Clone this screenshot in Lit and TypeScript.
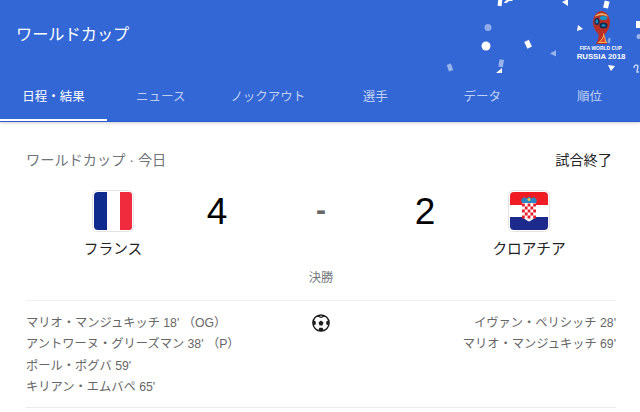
import { LitElement, html, css, svg } from "lit";
import { customElement } from "lit/decorators.js";

const confetti = svg`
  <g fill="#fff">
    <rect x="68" y="-2" width="4" height="8" transform="rotate(6 70 2)" />
    <path d="M74 3c1-2 3-4 5-3l4 0-1 1c-2 0-4 0-5 2z" />
    <path d="M132 2l6-3v7z" />
    <rect x="174" y="1" width="5" height="7" transform="rotate(14 176 4)" />
    <circle cx="56" cy="46" r="4.500" />
    <circle cx="58" cy="27.500" r="3.500" opacity=".45" />
    <rect x="95.500" y="40.500" width="5" height="7.500" transform="rotate(-25 98 44)" />
    <path d="M126 50v6.500l-6-3z" opacity=".5" />
    <rect x="69" y="59.500" width="4.500" height="7.500" transform="rotate(10 71 63)" opacity=".5" />
    <path d="M72 68v5h-6z" />
    <rect x="17.500" y="64" width="4.500" height="7" transform="rotate(-20 20 67)" opacity=".5" />
    <path d="M148 25l5 4l-6 2z" />
    <path d="M178 65l7 1l-4 5z" />
    <rect x="178" y="38" width="2.500" height="5" transform="rotate(10 179 40)" opacity=".4" />
    <rect x="206" y="21" width="4" height="7" />
    <circle cx="209" cy="36.500" r="2.500" opacity=".5" />
    <path d="M204 68c0-3 3-4 4-2l-1 6 2 0" fill="none" stroke="#fff" stroke-width="1.500" opacity=".7" />
  </g>`;

const logo = svg`
  <path d="M5.500 23C2 20 0 16 0 11.500 0 5 4 0 8.500 0S17 5 17 11.500c0 4.500-2 8.500-5 11.500-.5 3 .5 7 2.500 10H3c1.500-3 3-6 2.500-10z" fill="#b92f26" />
  <path d="M1.500 6C4 1 13 1 15.500 6 12 3.500 5 3.500 1.500 6z" fill="#e3b56a" />
  <ellipse cx="4" cy="10.500" rx="2.600" ry="3.600" fill="#0c3358" />
  <ellipse cx="3.800" cy="10.500" rx="1.300" ry="2" fill="#1b8fc2" />
  <ellipse cx="10.500" cy="7" rx="3.800" ry="2" fill="#1596c8" />
  <ellipse cx="10.500" cy="14.500" rx="4" ry="3" fill="#0b2c4e" />
  <ellipse cx="10.500" cy="14.500" rx="2" ry="1.300" fill="#1b8fc2" />
  <path d="M4.500 32c3.500-2.500 6-6 6-10.500l3.500 10.500z" fill="#efb758" />
  <path d="M7 31c2-2 3.500-4 4-6l1.500 6z" fill="#e5452f" />
`;

const soccer = svg`
  <circle cx="8" cy="8" r="7.200" fill="#fff" stroke="#1c1c1c" stroke-width="1.300" />
  <path d="M8 5.800l2.200 1.700-.9 2.700H6.700l-.9-2.700z" fill="#1c1c1c" />
  <path d="M5 1.200 8 2.400l3-1.200.6 1L8 3.600 4.400 2.200zM1 5.600l2.200.9.200 2.600-1.600.8L.8 8zM15 5.600l-2.200.9-.2 2.600 1.600.8L15.200 8zM5.600 14.600l1-2.300h2.800l1 2.300L8 15.300z" fill="#1c1c1c" />
`;

const checker = () => {
  const cells = [];
  for (let r = 0; r < 5; r++) {
    for (let c = 0; c < 5; c++) {
      if ((r + c) % 2 === 0) {
        cells.push(svg`<rect x=${14 + c * 2.8} y=${13.5 + r * 3} width="2.800" height="3" fill="#e8202a" />`);
      }
    }
  }
  return cells;
};

@customElement("app-root")
export class AppRoot extends LitElement {
  static styles = css`
    :host { display: block; width: 640px; height: 412px; overflow: hidden; background: #fff; font-family: "Liberation Sans", "Noto Sans CJK JP", sans-serif; }
    .header { position: relative; height: 122px; background: #3367d6; box-shadow: 0 1px 3px rgba(0,0,0,.2); display: flex; flex-direction: column; overflow: hidden; }
    .title { height: 81px; box-sizing: border-box; padding: 24px 16px 0; font-size: 16.200px; line-height: 20px; color: #fff; }
    .tabs { display: grid; grid-template-columns: repeat(6, 107.200px); height: 41px; border-bottom: 1px solid #2a5bd0; box-sizing: border-box; }
    .tab { display: flex; justify-content: center; align-items: center; padding-bottom: 12px; box-sizing: border-box; font-size: 12.500px; color: rgba(255,255,255,.7); white-space: nowrap; }
    .tab.on { color: #fff; box-shadow: inset 0 -2px 0 #fff; }
    .confetti { position: absolute; left: 430px; top: 0; }
    .logo { position: absolute; left: 574px; top: 11px; width: 54px; display: flex; flex-direction: column; align-items: center; color: #fff; }
    .logo svg { display: block; }
    .logo .l1 { font-size: 6px; line-height: 7px; font-weight: 700; white-space: nowrap; margin-top: 1px; transform: scaleX(.82); }
    .logo .l2 { font-size: 7.800px; line-height: 9px; font-weight: 700; white-space: nowrap; }
    .main { padding: 27px 24px 0 26px; }
    .top { display: flex; justify-content: space-between; align-items: center; height: 20px; font-size: 14.200px; color: #70757a; padding-right: 4px; }
    .status { color: #222; }
    .match { display: grid; grid-template-columns: repeat(5, 104px); padding-left: 35px; margin-top: 21px; color: #000; }
    .team { display: flex; flex-direction: column; align-items: center; font-size: 14.700px; color: #222; }
    .flag { display: block; }
    .name { margin-top: 7px; line-height: 20px; white-space: nowrap; }
    .score { font-size: 37px; line-height: 42px; text-align: center; padding-top: 1px; }
    .dash { color: #666; font-weight: 700; font-size: 30px; padding-top: 0; line-height: 40px; }
    .round { text-align: center; font-size: 12.300px; line-height: 16px; color: #70757a; margin-top: 11px; }
    .goals { display: grid; grid-template-columns: 1fr 24px 1fr; margin-top: 14px; padding: 12px 0 9px; border-top: 1px solid #f0f0f0; border-bottom: 1px solid #ebebeb; font-size: 12.250px; line-height: 21.300px; color: #666; white-space: nowrap; }
    .right { text-align: right; }
    .ball { display: flex; justify-content: center; padding-top: 1px; }
    .ball svg { display: block; }
  `;

  render() {
    const tabs = ["日程・結果", "ニュース", "ノックアウト", "選手", "データ", "順位"];
    return html`
      <div class="header">
        <svg class="confetti" width="210" height="90" viewBox="0 0 210 90" aria-hidden="true">${confetti}</svg>
        <div class="logo">
          <svg width="17" height="33" viewBox="0 0 17 33" aria-hidden="true">${logo}</svg>
          <div class="l1">FIFA WORLD CUP</div>
          <div class="l2">RUSSIA 2018</div>
        </div>
        <div class="title">ワールドカップ</div>
        <div class="tabs">
          ${tabs.map((t, i) => html`<div class="tab ${i === 0 ? "on" : ""}">${t}</div>`)}
        </div>
      </div>
      <div class="main">
        <div class="top"><span>ワールドカップ · 今日</span><span class="status">試合終了</span></div>
        <div class="match">
          <div class="team">
            <svg class="flag" width="42" height="42" viewBox="0 0 42 42" aria-hidden="true">
              <rect x=".5" y=".5" width="41" height="41" rx="5" fill="#fff" stroke="#e4e4e4" stroke-width="1"/>
              <path d="M2 6a4 4 0 0 1 4-4h9v38H6a4 4 0 0 1-4-4z" fill="#0d2a8c"/>
              <path d="M28 2h9a3 3 0 0 1 3 3v32a3 3 0 0 1-3 3h-9z" fill="#ef2b3d"/>
            </svg>
            <div class="name">フランス</div>
          </div>
          <div class="score">4</div>
          <div class="score dash">-</div>
          <div class="score">2</div>
          <div class="team">
            <svg class="flag" width="42" height="42" viewBox="0 0 42 42" aria-hidden="true">
              <rect x=".5" y=".5" width="41" height="41" rx="5" fill="#fff" stroke="#e4e4e4" stroke-width="1"/>
              <path d="M2 6a4 4 0 0 1 4-4h30a4 4 0 0 1 4 4v9H2z" fill="#ef1c24"/>
              <path d="M2 27h38v9a4 4 0 0 1-4 4H6a4 4 0 0 1-4-4z" fill="#1c2a8c"/>
              <path d="M14 13h14v11c0 4-4 6-7 7.500-3-1.500-7-3.500-7-7.500z" fill="#fff"/>
              ${checker()}
              <path d="M13 10l3-3 2.500 1.500L21 6.500l2.500 2L26 7l3 3-1 3H14z" fill="#2a86c4"/>
              <circle cx="21" cy="9.500" r="1.500" fill="#e6c64a"/>
            </svg>
            <div class="name">クロアチア</div>
          </div>
        </div>
        <div class="round">決勝</div>
        <div class="goals">
          <div>
            <div>マリオ・マンジュキッチ 18' （OG）</div>
            <div>アントワーヌ・グリーズマン 38' （P）</div>
            <div>ポール・ポグバ 59'</div>
            <div>キリアン・エムバペ 65'</div>
          </div>
          <div class="ball"><svg width="18" height="18" viewBox="0 0 16 16" aria-hidden="true">${soccer}</svg></div>
          <div class="right">
            <div>イヴァン・ペリシッチ 28'</div>
            <div>マリオ・マンジュキッチ 69'</div>
          </div>
        </div>
      </div>
    `;
  }
}
